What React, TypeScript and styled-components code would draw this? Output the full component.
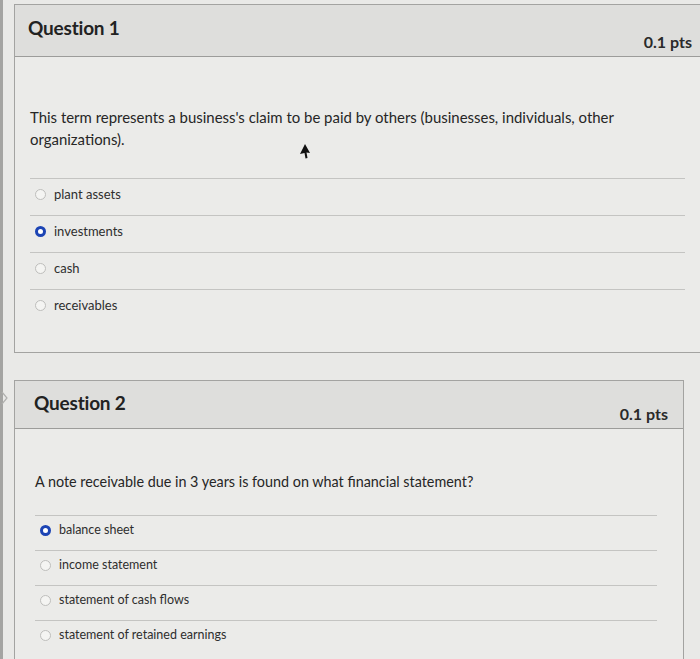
import React from "react";
import styled, { createGlobalStyle } from "styled-components";

const Global = createGlobalStyle`
  html, body { margin: 0; padding: 0; }
  body {
    background: #e9e9e7;
    font-family: Lato, "Open Sans", "Liberation Sans", sans-serif;
    color: #2b2b2b;
    width: 700px;
    height: 659px;
    overflow: hidden;
  }
`;

const Page = styled.div`
  position: relative;
  height: 659px;
  padding: 4px 0 0 14px;
  box-sizing: border-box;
  border-left: 3px solid #a4a4a2;
`;

const Card = styled.section<{ $w: number; $gap: number }>`
  position: relative;
  width: ${(p) => p.$w}px;
  margin-bottom: ${(p) => p.$gap}px;
  margin-left: -3px;
  border: 1px solid #a3a3a1;
  background: #ebebe9;
  box-sizing: border-box;
`;

const Header = styled.header<{ $h: number; $pl: number; $pr: number; $tm: number }>`
  height: ${(p) => p.$h}px;
  box-sizing: border-box;
  background: #dededc;
  border-bottom: 1px solid #9c9c9a;
  display: flex;
  justify-content: space-between;
  padding: ${(p) => p.$tm}px ${(p) => p.$pr}px 0 ${(p) => p.$pl}px;
`;

const Title = styled.h2`
  margin: 0;
  font-size: 19px;
  font-weight: 700;
  color: #222;
  letter-spacing: -0.2px;
  line-height: 24px;
`;

const Points = styled.div`
  align-self: flex-end;
  margin-bottom: 3px;
  font-size: 16px;
  font-weight: 700;
  color: #2a2a2a;
  line-height: 22px;
`;

const Body = styled.div<{ $pt: number; $pb: number; $pl: number; $pr: number; $fs: number }>`
  padding: ${(p) => p.$pt}px ${(p) => p.$pr}px ${(p) => p.$pb}px ${(p) => p.$pl}px;
  font-size: ${(p) => p.$fs}px;
`;

const Prompt = styled.p`
  margin: 0;
  font-size: 1.15em;
  line-height: 22px;
  color: #262626;
`;

const List = styled.ul<{ $mt: number }>`
  list-style: none;
  margin: ${(p) => p.$mt}px 0 0;
  padding: 0;
`;

const Option = styled.li<{ $h: number; $pt: number }>`
  height: ${(p) => p.$h}px;
  box-sizing: border-box;
  border-top: 1px solid #c4c4c2;
  display: flex;
  align-items: center;
  align-self: flex-start;
  padding: ${(p) => p.$pt}px 0 0 5px;
  gap: 8px;
  line-height: 16px;
  color: #2e2e2e;
  align-items: flex-start;
`;

const Radio = styled.span<{ $on: boolean }>`
  width: 11px;
  height: 11px;
  margin-top: 3px;
  border-radius: 50%;
  box-sizing: border-box;
  flex: none;
  background: ${(p) => (p.$on ? "#fff" : "#f4f4f2")};
  border: ${(p) => (p.$on ? "3px solid #1c44b4" : "1px solid #bebebc")};
`;

const Chevron = styled.svg`
  position: absolute;
  left: -14px;
  top: 10px;
`;

const Cursor = styled.svg`
  position: absolute;
  left: 296px;
  top: 144px;
`;

type Q = {
  title: string;
  prompt: string;
  options: string[];
  selected: number;
  w: number;
  gap: number;
  headerH: number;
  titleTm: number;
  titlePl: number;
  titlePr: number;
  fs: number;
  pt: number;
  pb: number;
  pl: number;
  pr: number;
  listMt: number;
  rowH: number;
  rowPt: number;
  chevron?: boolean;
};

const questions: Q[] = [
  {
    title: "Question 1",
    prompt:
      "This term represents a business's claim to be paid by others (businesses, individuals, other organizations).",
    options: ["plant assets", "investments", "cash", "receivables"],
    selected: 1,
    w: 687,
    gap: 27,
    headerH: 52,
    titleTm: 11,
    titlePl: 13,
    titlePr: 8,
    fs: 13,
    pt: 49,
    pb: 26,
    pl: 15,
    pr: 15,
    listMt: 28,
    rowH: 37,
    rowPt: 7,
  },
  {
    title: "Question 2",
    prompt: "A note receivable due in 3 years is found on what financial statement?",
    options: [
      "balance sheet",
      "income statement",
      "statement of cash flows",
      "statement of retained earnings",
    ],
    selected: 0,
    w: 670,
    gap: 0,
    headerH: 48,
    titleTm: 10,
    titlePl: 19,
    titlePr: 15,
    fs: 12.5,
    pt: 42,
    pb: 20,
    pl: 20,
    pr: 26,
    listMt: 22,
    rowH: 35,
    rowPt: 6,
    chevron: true,
  },
];

export default function App() {
  return (
    <>
      <Global />
      <Page>
        {questions.map((q) => (
          <Card key={q.title} $w={q.w} $gap={q.gap}>
            {q.chevron && (
              <Chevron width="8" height="14" viewBox="0 0 8 14">
                <path d="M1 1 L6 7 L1 13" fill="none" stroke="#b0b0ae" strokeWidth="1.2" />
              </Chevron>
            )}
            <Header $h={q.headerH} $pl={q.titlePl} $pr={q.titlePr} $tm={q.titleTm}>
              <Title>{q.title}</Title>
              <Points>0.1 pts</Points>
            </Header>
            <Body $pt={q.pt} $pb={q.pb} $pl={q.pl} $pr={q.pr} $fs={q.fs}>
              <Prompt>{q.prompt}</Prompt>
              <List $mt={q.listMt}>
                {q.options.map((o, i) => (
                  <Option key={o} $h={q.rowH} $pt={q.rowPt}>
                    <Radio $on={i === q.selected} />
                    {o}
                  </Option>
                ))}
              </List>
            </Body>
          </Card>
        ))}
        <Cursor width="12" height="16" viewBox="0 0 12 16">
          <path d="M6 0 L11 9 L7.5 8.5 L8.5 14 L6.5 14.5 L5.5 9 L1 10 Z" fill="#111" />
        </Cursor>
      </Page>
    </>
  );
}
